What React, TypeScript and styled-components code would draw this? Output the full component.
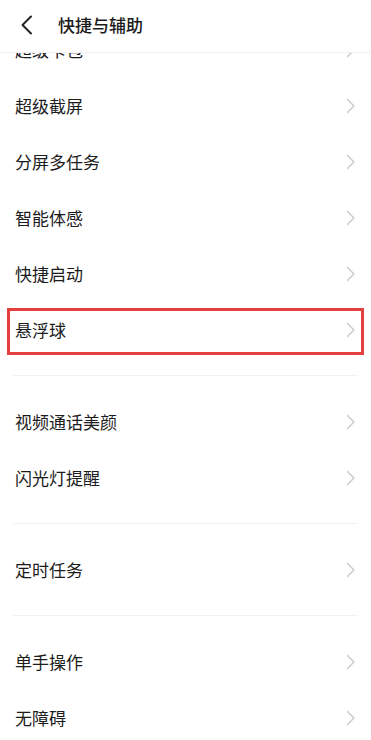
import React from 'react';
import styled, { createGlobalStyle, css } from 'styled-components';

const GlobalStyle = createGlobalStyle`
  html, body {
    margin: 0;
    padding: 0;
    background: #ffffff;
  }
  body {
    font-family: "Noto Sans CJK SC", "Noto Sans", sans-serif;
    color: #1c1c1c;
  }
`;

type Item = { label: string; highlighted?: boolean };

const sections: Item[][] = [
  [
    { label: '超级卡包' },
    { label: '超级截屏' },
    { label: '分屏多任务' },
    { label: '智能体感' },
    { label: '快捷启动' },
    { label: '悬浮球', highlighted: true },
  ],
  [{ label: '视频通话美颜' }, { label: '闪光灯提醒' }],
  [{ label: '定时任务' }],
  [{ label: '单手操作' }, { label: '无障碍' }],
];

const BackIcon = () => (
  <svg width="14" height="20" viewBox="0 0 14 20" fill="none">
    <path d="M11 1.5L2.5 10L11 18.5" stroke="#222" strokeWidth="2" strokeLinecap="round" strokeLinejoin="round" />
  </svg>
);

const ChevronIcon = () => (
  <svg width="10" height="16" viewBox="0 0 10 16" fill="none">
    <path d="M1.5 1.5L8 8L1.5 14.5" stroke="#c8c8c8" strokeWidth="1.4" strokeLinecap="round" strokeLinejoin="round" />
  </svg>
);

export default function App() {
  return (
    <>
      <GlobalStyle />
      <Screen>
        <Header>
          <BackButton>
            <BackIcon />
          </BackButton>
          <Title>快捷与辅助</Title>
        </Header>
        <Viewport>
          <List>
            {sections.map((items, i) => (
              <Section key={i} $first={i === 0}>
                {items.map((item) => (
                  <Row key={item.label} $highlighted={item.highlighted}>
                    <Label>{item.label}</Label>
                    <ChevronIcon />
                  </Row>
                ))}
              </Section>
            ))}
          </List>
        </Viewport>
      </Screen>
    </>
  );
}

const Screen = styled.div`
  width: 371px;
  height: 740px;
  display: flex;
  flex-direction: column;
  overflow: hidden;
  background: #fff;
`;

const Header = styled.div`
  position: relative;
  z-index: 1;
  flex: 0 0 53px;
  display: flex;
  align-items: center;
  gap: 24px;
  padding-left: 20px;
  background: #fff;
  border-bottom: 1px solid #f1f1f1;
  box-sizing: border-box;
`;

const BackButton = styled.div`
  width: 14px;
  height: 20px;
  display: flex;
  margin-top: -2px;
`;

const Title = styled.span`
  font-size: 17px;
  font-weight: 500;
  color: #1a1a1a;
  margin-top: -3px;
`;

const Viewport = styled.div`
  flex: 1;
  overflow: hidden;
`;

const List = styled.div`
  margin-top: -31px;
  display: flex;
  flex-direction: column;
`;

const Section = styled.div<{ $first?: boolean }>`
  display: flex;
  flex-direction: column;
  ${({ $first }) =>
    !$first &&
    css`
      &::before {
        content: '';
        display: block;
        height: 1px;
        margin: 17px 13px 18px 13px;
        background: #f2f2f2;
      }
    `}
`;

const Row = styled.div<{ $highlighted?: boolean }>`
  position: relative;
  height: 56px;
  display: flex;
  align-items: center;
  justify-content: space-between;
  padding: 0 15px 0 15px;
  ${({ $highlighted }) =>
    $highlighted &&
    css`
      &::after {
        content: '';
        position: absolute;
        top: 6px;
        left: 7px;
        right: 7px;
        bottom: 3px;
        border: 3px solid #e5403f;
      }
    `}
`;

const Label = styled.span`
  font-size: 17px;
  color: #1c1c1c;
  margin-top: -2px;
`;
